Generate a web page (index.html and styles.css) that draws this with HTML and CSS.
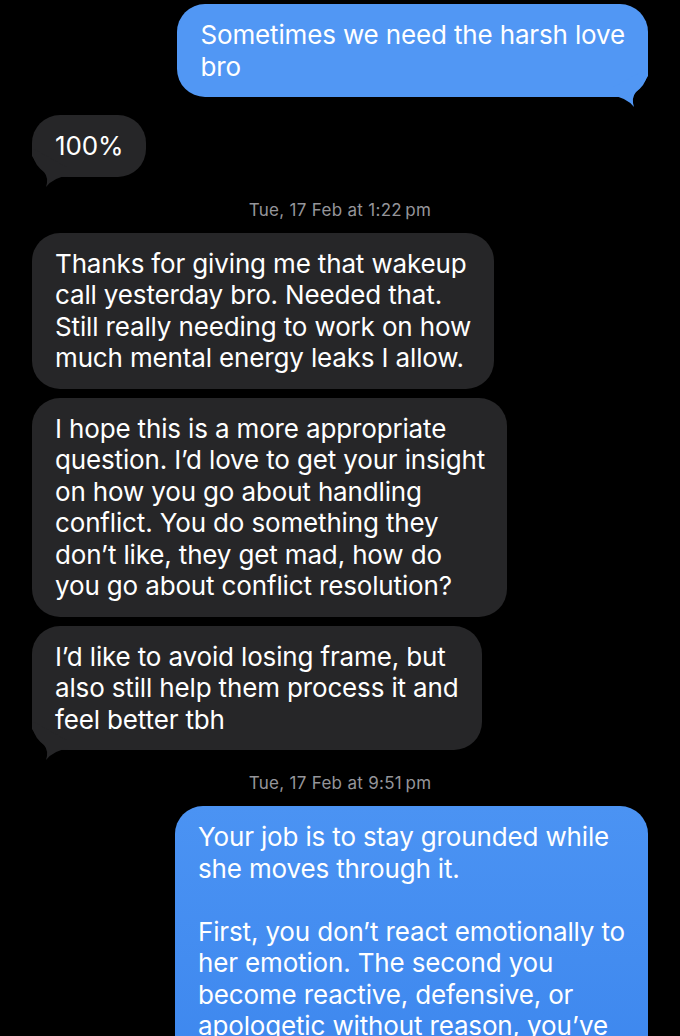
FILE: index.html
```html
<!DOCTYPE html>
<html lang="en">
<head>
<meta charset="UTF-8">
<meta name="viewport" content="width=device-width, initial-scale=1.0">
<title>Messages</title>
<link rel="stylesheet" href="styles.css">
</head>
<body>
<div class="chat">

  <div class="bubble out first">
    Sometimes we need the harsh love<br>bro
    <svg class="tail tail-right" viewBox="0 0 40 40"><path d="M4 20 L4 28 Q18 29 26 39 Q23 30 28 24 Q34 18 40 8 L40 0 Z"/></svg>
  </div>

  <div class="bubble in gap-big">
    100%
    <svg class="tail tail-left" viewBox="0 0 40 40"><path d="M36 20 L36 28 Q22 29 14 39 Q17 30 12 24 Q6 18 0 8 L0 0 Z"/></svg>
  </div>

  <div class="stamp">Tue, 17 Feb at 1:22&#8239;pm</div>

  <div class="bubble in">
    Thanks for giving me that wakeup<br>call yesterday bro. Needed that.<br>Still really needing to work on how<br>much mental energy leaks I allow.
  </div>

  <div class="bubble in gap">
    I hope this is a more appropriate<br>question. I’d love to get your insight<br>on how you go about handling<br>conflict. You do something they<br>don’t like, they get mad, how do<br>you go about conflict resolution?
  </div>

  <div class="bubble in gap">
    I’d like to avoid losing frame, but<br>also still help them process it and<br>feel better tbh
    <svg class="tail tail-left" viewBox="0 0 40 40"><path d="M36 20 L36 28 Q22 29 14 39 Q17 30 12 24 Q6 18 0 8 L0 0 Z"/></svg>
  </div>

  <div class="stamp">Tue, 17 Feb at 9:51&#8239;pm</div>

  <div class="bubble out long">
    Your job is to stay grounded while<br>she moves through it.<br><br>First, you don’t react emotionally to<br>her emotion. The second you<br>become reactive, defensive, or<br>apologetic without reason, you’ve
  </div>

</div>
</body>
</html>
```

FILE: styles.css
```css
html, body {
  background-color: #000;
}

body {
  margin: 0;
  overflow: hidden;
  font-family: Inter, "Liberation Sans", Arial, sans-serif;
  color: #fff;
}

.chat {
  display: flex;
  flex-direction: column;
  padding: 4px 32px 0 32px;
}

.bubble {
  position: relative;
  max-width: 475px;
  box-sizing: border-box;
  padding: 15px 23px;
  border-radius: 28px;
  font-size: 26px;
  line-height: 31.5px;
  letter-spacing: -0.15px;
  white-space: nowrap;
}

.bubble.in {
  align-self: flex-start;
  background-color: #262628;
  fill: #262628;
}

.bubble.out {
  align-self: flex-end;
  background-color: #5197f4;
  fill: #5197f4;
}

.bubble.long {
  background: linear-gradient(#4b93f3, #3d87ee 90%);
  padding-bottom: 60px;
}

.gap {
  margin-top: 9px;
}

.gap-big {
  margin-top: 18px;
}

/* хвостик пузыря */
.tail {
  position: absolute;
  bottom: -11px;
  width: 40px;
  height: 40px;
}

.tail-right {
  right: 0;
}

.tail-left {
  left: 0;
}

.stamp {
  align-self: center;
  margin: 23px 0 12px;
  font-size: 17px;
  line-height: 21px;
  color: #95959a;
  letter-spacing: 0.3px;
}
```
